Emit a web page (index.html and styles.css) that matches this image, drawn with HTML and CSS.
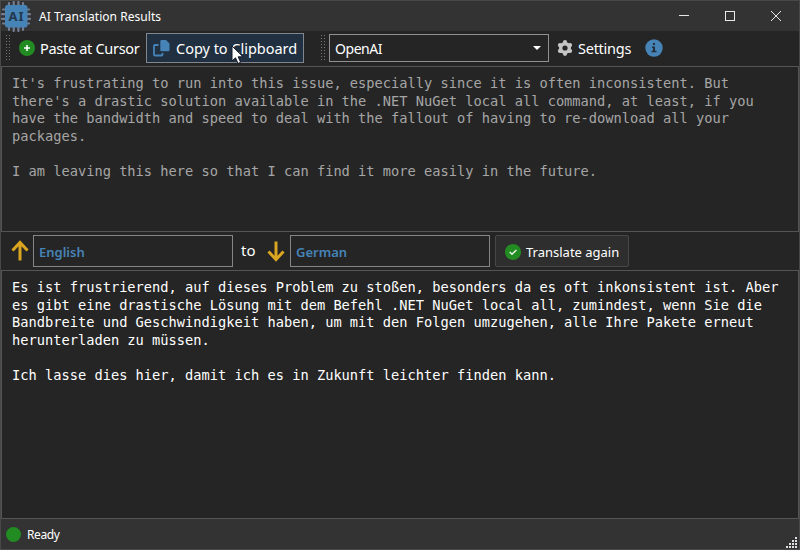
FILE: index.html
```html
<!DOCTYPE html>
<html lang="en">
<head>
<meta charset="utf-8">
<title>AI Translation Results</title>
<link rel="stylesheet" href="styles.css">
</head>
<body>
<div class="window">
  <header class="titlebar">
    <svg class="logo" width="30" height="31" viewBox="0 0 30 31">
      <path d="M8 2v27M12.700 1v29M17.400 1v29M22 2v27M2 8.500h26M1 13.200h28M1 17.800h28M2 22.500h26" stroke="#717d92" stroke-width="2.200" stroke-linecap="round"/>
      <rect x="4" y="4" width="22.500" height="22.500" rx="2.500" fill="#4683b7"/>
      <text x="7.500" y="19.500" class="logo-text">AI</text>
    </svg>
    <h1 class="title">AI Translation Results</h1>
    <svg class="controls" width="138" height="30" viewBox="0 0 138 30" fill="none" stroke="#e8e8e8">
      <path d="M18 14.500h10"/><rect x="64.500" y="10.500" width="9" height="9"/><path d="M110 10l10 10M120 10l-10 10"/>
    </svg>
  </header>
  <nav class="toolbar">
    <i class="grip"></i>
    <button class="tool paste">
      <svg width="16" height="16" viewBox="0 0 16 16"><circle cx="8" cy="8" r="8" fill="#228b22"/><path d="M8 5v6M5 8h6" stroke="#fff" stroke-width="1.600"/></svg>
      <span class="t-paste">Paste at Cursor</span>
    </button>
    <button class="tool copy">
      <svg width="17" height="17" viewBox="0 0 17 17"><path d="M8.500 0H13l3.500 3.500v6.500a1.200 1.200 0 0 1-1.200 1.200H8.500a1.200 1.200 0 0 1-1.200-1.200v-8.800A1.200 1.200 0 0 1 8.500 0z" fill="#4683b7"/><path d="M5.500 5H2q-1 0-1 1v8.500q0 1 1 1h6.500q1 0 1-1V13" fill="none" stroke="#4683b7" stroke-width="1.800"/></svg>
      <span class="t-copy">Copy to Clipboard</span>
    </button>
    <i class="grip second"></i>
    <div class="select"><span>OpenAI</span><i class="caret"></i></div>
    <button class="tool settings">
      <svg width="16" height="16" viewBox="0 0 16 16"><path d="M8 2.200v11.600M3 5.100l10 5.800M13 5.100l-10 5.800" stroke="#c4c4c4" stroke-width="4.200" stroke-linecap="round"/><circle cx="8" cy="8" r="6" fill="#c4c4c4"/><circle cx="8" cy="8" r="2.600" fill="#252525"/></svg>
      <span class="t-settings">Settings</span>
    </button>
    <svg class="info" width="18" height="18" viewBox="0 0 18 18"><circle cx="9" cy="9" r="8.700" fill="#4683b7"/><path d="M8 4h2v2H8zM7 7.500h3v4.300h1.500v1.400h-5v-1.400H8V9H7z" fill="#252f3b"/></svg>
  </nav>
  <main class="content">
    <section class="box source">It's frustrating to run into this issue, especially since it is often inconsistent. But
there's a drastic solution available in the .NET NuGet local all command, at least, if you
have the bandwidth and speed to deal with the fallout of having to re-download all your
packages.

I am leaving this here so that I can find it more easily in the future.</section>
    <div class="languages">
      <svg class="arrow up" width="18" height="22" viewBox="0 0 18 22"><path d="M9 20.500V3M1.500 10.500L9 2.500l7.500 8" /></svg>
      <div class="field"><span>English</span></div>
      <span class="to">to</span>
      <svg class="arrow" width="18" height="22" viewBox="0 0 18 22"><path d="M9 1.500V19M1.500 11.500L9 19.500l7.500-8" /></svg>
      <div class="field"><span>German</span></div>
      <button class="again">
        <svg width="16" height="16" viewBox="0 0 16 16"><circle cx="8" cy="8" r="8" fill="#228b22"/><path d="M4.700 8l2.300 2.300 4.400-4.300" fill="none" stroke="#e8f4e8" stroke-width="1.500"/></svg>
        <span>Translate again</span>
      </button>
    </div>
    <section class="box result">Es ist frustrierend, auf dieses Problem zu stoßen, besonders da es oft inkonsistent ist. Aber
es gibt eine drastische Lösung mit dem Befehl .NET NuGet local all, zumindest, wenn Sie die
Bandbreite und Geschwindigkeit haben, um mit den Folgen umzugehen, alle Ihre Pakete erneut
herunterladen zu müssen.

Ich lasse dies hier, damit ich es in Zukunft leichter finden kann.</section>
  </main>
  <footer class="status">
    <i class="dot"></i><span class="t-ready">Ready</span>
    <svg class="resize" width="12" height="12" viewBox="0 0 12 12" fill="#e0e0e4"><path d="M9 0h2v2H9zM6 3h2v2H6zM9 3h2v2H9zM3 6h2v2H3zM6 6h2v2H6zM9 6h2v2H9zM0 9h2v2H0zM3 9h2v2H3zM6 9h2v2H6zM9 9h2v2H9z"/></svg>
  </footer>
  <svg class="cursor" width="13" height="20" viewBox="0 0 13 20"><path d="M1 1v15l3.500-3.200L7 18.500l2.600-1.200-2.400-5.500H12z" fill="#fff" stroke="#111827"/></svg>
</div>
</body>
</html>
```
FILE: styles.css
```css
* { box-sizing: border-box; }
body { margin: 0; background: #252525; color: #fff; font-family: "Noto Sans", sans-serif; }
button { font: inherit; color: inherit; background: none; border: 0; padding: 0; }
svg { flex: none; display: block; }
span { white-space: nowrap; }
.window { position: relative; width: 800px; height: 550px; display: flex; flex-direction: column; border: 1px solid #484848; overflow: hidden; }
.titlebar { height: 30px; background: #333; display: flex; align-items: center; flex: none; }
.logo-text { font: bold 13px "Noto Sans", sans-serif; fill: #22384e; letter-spacing: 1px; }
.title { margin: 1px 0 0 8px; font-size: 12px; font-weight: 400; line-height: 30px; letter-spacing: 0.040px; white-space: nowrap; }
.controls { margin-left: auto; }
.toolbar { height: 35px; flex: none; display: flex; align-items: center; font-size: 14.500px; padding-bottom: 1px; }
.grip { flex: none; width: 5px; height: 28px; margin-left: 4px; background: radial-gradient(circle, #777 0.700px, transparent 0.900px) 0 0 / 3px 3px; }
.tool { display: flex; align-items: center; }
.paste { margin-left: 9px; width: 127px; gap: 5px; }
.t-paste { letter-spacing: -0.300px; }
.copy { width: 158px; height: 30px; border: 1px solid #7f868d; background: #203040; padding-left: 6px; gap: 6px; }
.t-copy { letter-spacing: -0.020px; }
.second { margin-left: 16px; }
.select { margin-left: 4px; width: 220px; height: 28px; border: 1px solid #909090; display: flex; align-items: center; justify-content: space-between; padding: 0 7px 0 5px; font-size: 14px; letter-spacing: -0.450px; }
.caret { border: 4px solid transparent; border-top-color: #fff; border-bottom: 0; }
.settings { margin-left: 8px; gap: 5px; width: 88px; }
.t-settings { letter-spacing: -0.250px; }
.content { flex: 1; display: flex; flex-direction: column; }
.box { border: 1px solid #555; font: 13.700px/17.600px "DejaVu Sans Mono", monospace; white-space: pre; padding: 8px 10px; overflow: hidden; }
.source { height: 166px; color: #a5a5a5; }
.result { height: 249px; color: #fff; }
.languages { height: 38px; display: flex; align-items: center; }
.arrow { fill: none; stroke: #daa520; stroke-width: 3; margin-left: 11px; margin-right: 5px; }
.up { margin: 0 4px 0 10px; }
.field { width: 200px; height: 32px; border: 1px solid #858585; color: #4683b7; font-size: 13px; font-weight: 600; padding: 2px 0 0 5px; display: flex; align-items: center; }
.to { margin-left: 8px; width: 15px; font-size: 15px; margin-top: -2px; }
.again { margin-left: 5px; width: 134px; height: 32px; border: 1px solid #484848; border-radius: 2px; background: #2e2e2e; padding: 2px 0 0 9px; display: flex; align-items: center; gap: 5px; font-size: 13px; }
.status { flex: 1; background: #333; display: flex; align-items: center; font-size: 12px; position: relative; }
.dot { width: 15px; height: 15px; border-radius: 50%; background: #228b22; margin: 0 6px 0 5px; }
.t-ready { letter-spacing: -0.400px; }
.resize { position: absolute; right: 1px; bottom: 0; }
.cursor { position: absolute; left: 230px; top: 44px; }
```
